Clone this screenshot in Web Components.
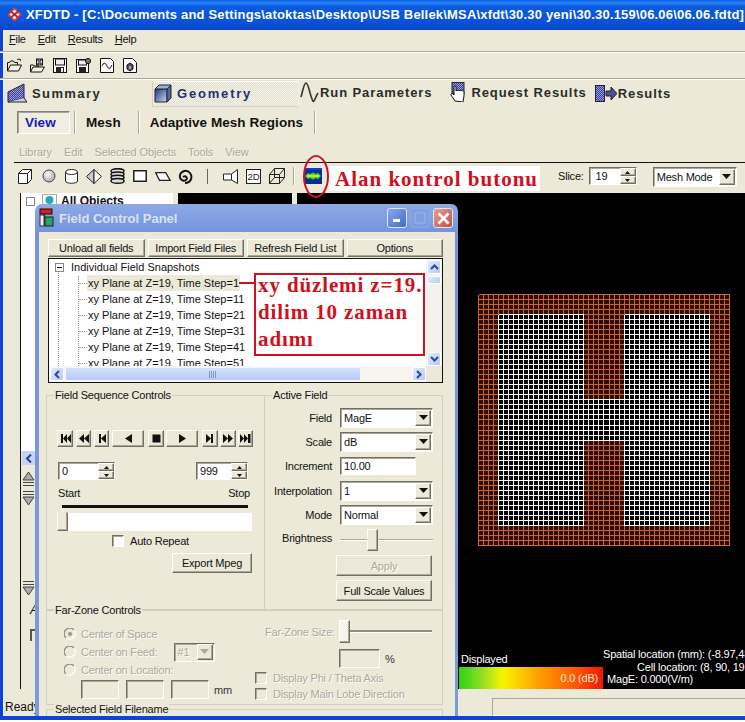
<!DOCTYPE html>
<html><head><meta charset="utf-8">
<style>
html,body{margin:0;padding:0;background:#fff;overflow:hidden}
body{width:745px;height:722px;font-family:"Liberation Sans",Arial,sans-serif;font-size:11px;letter-spacing:-.2px;color:#111}
</style></head><body>
<xfd-app></xfd-app>
<script>
const F='"Liberation Sans",Arial,sans-serif';
function def(name,css,html,init){
  customElements.define(name,class extends HTMLElement{
    constructor(){super();this.attachShadow({mode:'open'});}
    connectedCallback(){
      const h=typeof html==='function'?html(this):html;
      this.shadowRoot.innerHTML='<style>'+css+'</style>'+h;
      if(init)init(this);
    }
  });
}
const raised='background:#ece9d8;border:1px solid;border-color:#fff #716f64 #716f64 #fff;box-shadow:inset -1px -1px 0 #aca899;';
const sunken='border:1px solid;border-color:#716f64 #fff #fff #716f64;box-shadow:inset 1px 1px 0 #aca899;';

/* ---- basic controls ---- */
def('x-btn',`:host{display:flex;box-sizing:border-box;align-items:center;justify-content:center;${raised}font-size:11px;color:#111;white-space:nowrap}
:host([disabled]){color:#aca899;text-shadow:1px 1px 0 #fff}`,`<slot></slot>`);

const arrow=`<svg width="9" height="6" viewBox="0 0 9 6"><path d="M0 0h9L4.5 5z" fill="currentColor"/></svg>`;
def('x-select',`:host{display:flex;box-sizing:border-box;height:20px;background:#fff;${sunken}font-size:11px;color:#111;padding-left:3px;align-items:center;justify-content:space-between}
:host([disabled]){background:#ece9d8;color:#aca899}
b{display:flex;box-sizing:border-box;width:16px;height:16px;margin:1px;${raised}align-items:center;justify-content:center;font-weight:normal;color:#111}
:host([disabled]) b{color:#aca899}
svg{display:block}`,e=>`<span>${e.getAttribute('value')}</span><b>${arrow}</b>`);

def('x-input',`:host{display:block;box-sizing:border-box;background:#fff;${sunken}font-size:11px;color:#111;padding:1px 3px;line-height:15px}
:host([disabled]){background:#ece9d8}`,`<slot></slot>`);

def('x-spin',`:host{display:flex;box-sizing:border-box;height:18px;background:#fff;${sunken}font-size:11px;color:#111;align-items:center;justify-content:space-between;padding-left:3px}
i{display:flex;flex-direction:column;width:16px;height:16px}
u{flex:1;display:flex;${raised}align-items:center;justify-content:center;text-decoration:none;font:7px/1 ${F};color:#111}`,
e=>`<span>${e.getAttribute('value')}</span><i><u><svg width="5" height="3"><path d="M0 3h5L2.5 0z" fill="#111"/></svg></u><u><svg width="5" height="3"><path d="M0 0h5L2.5 3z" fill="#111"/></svg></u></i>`);

def('x-group',`:host{display:block;box-sizing:border-box;position:relative;border:1px solid #d0d0bf;border-radius:0}
.l{position:absolute;left:7px;top:-8px;background:#ece9d8;padding:0 1px;font-size:11px;line-height:15px;color:#111;white-space:nowrap}`,
e=>`<div class="l">${e.getAttribute('legend')}</div><slot></slot>`);

def('x-check',`:host{display:flex;align-items:center;font-size:11px;color:#111;white-space:nowrap}
:host([disabled]){color:#aca899;text-shadow:1px 1px 0 #fff}
s{display:block;box-sizing:border-box;width:12px;height:12px;background:#fff;${sunken}margin-right:6px;flex:none}
:host([disabled]) s{background:#ece9d8}`,`<s></s><slot></slot>`);

def('x-radio',`:host{display:flex;align-items:center;font-size:11px;color:#aca899;text-shadow:1px 1px 0 #fff;white-space:nowrap}
svg{margin-right:5px;flex:none}`,e=>`<svg width="12" height="12" viewBox="0 0 12 12"><circle cx="6" cy="6" r="5.5" fill="#ece9d8"/><path d="M1.8 9.8A5.5 5.5 0 0 1 9.8 1.8" fill="none" stroke="#8f8d80" stroke-width="1.3"/><path d="M10.2 2.6A5.5 5.5 0 0 1 2.6 10.2" fill="none" stroke="#fff" stroke-width="1.2"/>${e.hasAttribute('on')?'<circle cx="6" cy="6" r="2" fill="#9a988a"/>':''}</svg><slot></slot>`);

/* ---- app top ---- */
def('xfd-title',`:host{display:flex;box-sizing:border-box;height:30px;align-items:center;padding-left:7px;padding-bottom:1px;background:linear-gradient(#0a5fe8 0,#2a83f5 3px,#0b5ce0 6px,#0a50d8 24px,#0a44c4 30px);color:#fff;white-space:nowrap;overflow:hidden;font:bold 13px ${F};letter-spacing:.185px}
svg{flex:none;margin-right:4px}`,
`<svg width="15" height="15" viewBox="0 0 15 15"><path d="M7.5 0L15 7.5 7.5 15 0 7.5z" fill="#d33a3a"/><path d="M7.5 2.5l5 5-5 5-5-5z" fill="#fff"/><path d="M4 4.5l7 6M11 4.5l-7 6" stroke="#b22" stroke-width="1.8"/></svg><span>XFDTD - [C:\\Documents and Settings\\atoktas\\Desktop\\USB Bellek\\MSA\\xfdt\\30.30 yeni\\30.30.159\\06.06\\06.06.fdtd]</span>`);

def('xfd-menu',`:host{display:flex;box-sizing:border-box;height:22px;align-items:center;padding-left:9px;gap:12px;border-bottom:1px solid #aca899;box-shadow:0 1px 0 #fff;font-size:11px;letter-spacing:-.25px;color:#111;padding-bottom:3px}
u{text-decoration:underline}`,`<span><u>F</u>ile</span><span><u>E</u>dit</span><span><u>R</u>esults</span><span><u>H</u>elp</span>`);

const S='fill="none" stroke="#111"';
def('xfd-filebar',`:host{display:flex;box-sizing:border-box;height:27px;align-items:center;padding-left:7px;gap:8px;border-bottom:1px solid #aca899;box-shadow:0 1px 0 #fff}
svg{display:block;flex:none}`,
`<svg width="15" height="15" viewBox="0 0 15 15" ${S}><path d="M.5 13V4.5h2l1-1.5h3l1 1.5h3V7"/><path d="M.5 13l3-6h11l-3 6z" fill="#f6f4ea"/><path d="M10 2c1-1.2 3-1.2 4 .2l-1 .3" /></svg>
<svg width="15" height="15" viewBox="0 0 15 15" ${S}><path d="M.5 14V7h3l1 1h4V10"/><path d="M.5 14l2.5-5h11.500l-3 5z" fill="#f6f4ea"/><rect x="6.500" y="1" width="6" height="6" fill="#ddd"/><path d="M8 1v2h3V1M8 7V5h3v2"/></svg>
<svg width="14" height="15" viewBox="0 0 14 15"><rect x=".5" y=".5" width="13" height="14" fill="#fff" stroke="#111"/><rect x="2.500" y="1" width="9" height="6" fill="#eee" stroke="#111"/><rect x="3" y="9" width="8" height="5.500" fill="#222"/><rect x="8" y="10" width="2" height="4" fill="#eee"/></svg>
<svg width="15" height="15" viewBox="0 0 15 15" style="margin-left:1px"><rect x=".5" y="1.500" width="12" height="13" fill="#fff" stroke="#111"/><rect x="2.500" y="2" width="8" height="5" fill="#eee" stroke="#111"/><rect x="3" y="9" width="7" height="5.500" fill="#222"/><circle cx="12" cy="3" r="2.600" fill="#777" stroke="#111"/></svg>
<svg width="14" height="15" viewBox="0 0 14 15" style="margin-left:1px"><path d="M.5.500h10l3 3v11H.5z" fill="#fff" stroke="#111"/><path d="M2 8c2-4 3-4 5 0s3 3 5-1" fill="none" stroke="#445" stroke-width="1.200"/></svg>
<svg width="14" height="15" viewBox="0 0 14 15" style="margin-left:1px"><path d="M.5.500h9l4 4v10H.5z" fill="#fff" stroke="#111"/><path d="M4 7l3-2 3 2v4l-3 2-3-2z" fill="#555" stroke="#111"/><path d="M7 8v3" stroke="#fff"/></svg>`);

const hatch=`<pattern id="h" width="2" height="2" patternUnits="userSpaceOnUse"><rect width="2" height="2" fill="#3d3f95"/><rect width="1" height="1" fill="#9a9ce0"/><rect x="1" y="1" width="1" height="1" fill="#9a9ce0"/></pattern>`;
def('xfd-tabs',`:host{display:flex;box-sizing:border-box;height:28px;align-items:center;font:bold 13px ${F};letter-spacing:.9px;color:#2b2b2b;white-space:nowrap}
svg{display:block;flex:none}
.t{display:flex;align-items:center}
.geo{box-sizing:border-box;width:147px;height:26px;padding-left:1px;border:1px solid;border-color:#fff #f5f4ec #d4d2c2 #d4d2c2;background:repeating-conic-gradient(#f4f2e8 0 25%,#e4e1d0 0 50%) 0 0/2px 2px;color:#23307a;letter-spacing:1.800px;margin-top:1px}
.geo svg{margin-right:5px}`,
`<div class="t" style="margin-left:7px;letter-spacing:1.400px"><svg width="21" height="20" viewBox="0 0 21 20" style="margin-right:4px"><defs>${hatch}</defs><path d="M1 9L17 1v14L1 19z" fill="url(#h)" stroke="#223"/><path d="M1 19h19l-3-4" fill="#cfcfe8" stroke="#223"/></svg>Summary</div>
<div class="t geo" style="margin-left:51px"><svg width="18" height="19" viewBox="0 0 18 19"><defs><linearGradient id="g" x1="0" y1="0" x2="1" y2="1"><stop offset="0" stop-color="#1d3a7a"/><stop offset="1" stop-color="#c8d8f0"/></linearGradient></defs><path d="M1 5h12v13H1z" fill="url(#g)" stroke="#223"/><path d="M1 5l4-4h12l-4 4z" fill="#9db1d0" stroke="#223"/><path d="M13 5l4-4v13l-4 4z" fill="#4a6aa0" stroke="#223"/></svg>Geometry</div>
<div class="t" style="margin-left:1px;margin-top:-2px"><svg width="19" height="21" viewBox="0 0 19 21" style="margin-right:1px"><path d="M1 15C3 8 4 1 6 1s3 7 5 13 2 6 3 5 2-5 4-8" fill="none" stroke="#333" stroke-width="1.600"/></svg>Run Parameters</div>
<div class="t" style="margin-left:18px;margin-top:-2px"><svg width="18" height="20" viewBox="0 0 18 20" style="margin-right:3px"><defs>${hatch}</defs><rect x="2" y="0.500" width="12" height="11" fill="url(#h)" stroke="#223"/><path d="M5 19l-4-6c-.5-1.500 1-2 2-1l1 1V5c0-1.500 2-1.500 2 0v4c0-1 2-1 2 0 0-1 2-1 2 0 0-1 2-.6 2 0 .5-.5 2 0 2 1v4l-1 6z" fill="#fff" stroke="#111"/></svg>Request Results</div>
<div class="t" style="margin-left:8px"><svg width="22" height="17" viewBox="0 0 22 17" style="margin-right:1px"><defs>${hatch}</defs><rect x=".5" y=".5" width="9" height="16" fill="url(#h)" stroke="#223"/><path d="M11 6h5V2l6 6.500-6 6.500v-4h-5z" fill="#4a4c9c" stroke="#223"/></svg>Results</div>`);

def('xfd-subtabs',`:host{display:flex;box-sizing:border-box;height:30px;align-items:center;font:bold 13.500px ${F};letter-spacing:.05px;color:#111;white-space:nowrap;padding-left:17px}
.v{box-sizing:border-box;width:53px;height:23px;display:flex;align-items:center;padding-left:7px;color:#1a1ab8;background:#f0eee2;border:1px solid;border-color:#808076 #fff #fff #808076;box-shadow:inset 1px 1px 0 #a8a698}
.s{width:1px;height:23px;background:#aca899;border-right:1px solid #fff}`,`<div class="v">View</div><div class="s" style="margin-left:4px;margin-right:10px"></div><div>Mesh</div><div class="s" style="margin-left:17px;margin-right:10px"></div><div>Adaptive Mesh Regions</div><div class="s" style="margin-left:11px"></div>`);

def('xfd-menu2',`:host{display:flex;box-sizing:border-box;height:25px;align-items:flex-end;padding:0 0 4px 19px;color:#aca899;font-size:11px;letter-spacing:-.1px;white-space:nowrap;text-shadow:1px 1px 0 #f7f6ef}
span{display:block}`,`<span>Library</span><span style="margin-left:12px">Edit</span><span style="margin-left:12px">Selected Objects</span><span style="margin-left:12px">Tools</span><span style="margin-left:12px">View</span>`);

def('xfd-geobar',`:host{display:flex;box-sizing:border-box;height:31px;margin-left:14px;border-top:1px solid #111;align-items:center;position:relative;white-space:nowrap;font-size:11px;padding-bottom:4px}
svg{display:block;flex:none}
.sep{width:1px;height:15px;background:#666;flex:none}
.sep2{width:1px;height:18px;background:#aca899;border-right:1px solid #fff;flex:none}
.note{box-sizing:border-box;width:211px;height:25px;background:#fff;margin:4px 0 0 7px;font:bold 21px "Liberation Serif",serif;letter-spacing:1px;color:#d01020;line-height:27px;padding-left:6px}
.ring{position:absolute;left:289px;top:-8px;width:26px;height:43px;box-sizing:border-box;border:2px solid #d01020;border-radius:50%}
x-spin{width:48px;margin-left:5px}
x-select{width:84px;margin:2px 0 0 16px;height:20px}`,
`<svg width="14" height="15" viewBox="0 0 14 15" style="margin-left:4px" fill="#fff" stroke="#222"><path d="M.5 4.500h9v10h-9z"/><path d="M.5 4.500l4-4h9l-4 4zM9.500 4.500l4-4v10l-4 4z"/></svg>
<svg width="14" height="14" viewBox="0 0 14 14" style="margin-left:10px"><defs><radialGradient id="sp" cx=".4" cy=".35"><stop offset="0" stop-color="#fff"/><stop offset="1" stop-color="#bbb"/></radialGradient></defs><circle cx="7" cy="7" r="6" fill="url(#sp)" stroke="#444"/></svg>
<svg width="13" height="15" viewBox="0 0 13 15" style="margin-left:9px" fill="#fff" stroke="#222"><path d="M.5 3v9c0 3 12 3 12 0V3"/><ellipse cx="6.500" cy="3" rx="6" ry="2.500"/></svg>
<svg width="16" height="15" viewBox="0 0 16 15" style="margin-left:8px" stroke="#222"><path d="M8 .5L.5 7.500 8 14.500z" fill="#ccc"/><path d="M8 .5l7.500 7-7.500 7z" fill="#fff"/></svg>
<svg width="15" height="16" viewBox="0 0 15 16" style="margin-left:8px" fill="#ddd" stroke="#111" stroke-width="1.500"><ellipse cx="7.500" cy="3" rx="6.500" ry="2.300"/><ellipse cx="7.500" cy="6.300" rx="6.500" ry="2.300"/><ellipse cx="7.500" cy="9.600" rx="6.500" ry="2.300"/><ellipse cx="7.500" cy="12.900" rx="6.500" ry="2.300"/></svg>
<svg width="14" height="12" viewBox="0 0 14 12" style="margin-left:8px"><rect x=".75" y=".75" width="12.500" height="10.500" fill="#fff" stroke="#222" stroke-width="1.500"/></svg>
<svg width="16" height="9" viewBox="0 0 16 9" style="margin-left:8px"><path d="M.7.700h10l4.500 7.600H4.500z" fill="#fff" stroke="#222" stroke-width="1.300"/></svg>
<svg width="16" height="15" viewBox="0 0 16 15" style="margin-left:6px"><path d="M6 8c3-2 5 1 3 3-3 2-7-1-6-5s7-6 10-2 1 10-5 10" fill="none" stroke="#111" stroke-width="1.900"/></svg>
<div class="sep" style="margin-left:14px"></div>
<svg width="15" height="15" viewBox="0 0 15 15" style="margin-left:15px" fill="#fff" stroke="#222"><path d="M.5 5h8v6h-8z"/><path d="M8.500 5L14.500.5v14L8.500 11z"/></svg>
<svg width="15" height="15" viewBox="0 0 15 15" style="margin-left:8px"><rect x=".5" y=".5" width="14" height="14" fill="#fff" stroke="#222"/><text x="7.500" y="11.300" font-size="9.500" text-anchor="middle" fill="#222" font-family="Liberation Sans" letter-spacing="0">2D</text></svg>
<svg width="16" height="16" viewBox="0 0 16 16" style="margin-left:8px" fill="none" stroke="#222"><path d="M.5 6.500h10v9H.5zM.5 6.500l5-6h10l-5 6M10.500 15.500l5-6v-9M5.500.5v9h10M5.500 9.500l-5 6"/></svg>
<div class="sep2" style="margin-left:8px"></div>
<svg width="18" height="16" viewBox="0 0 18 16" style="margin-left:9px"><rect width="18" height="16" fill="#0a2a9c"/><rect y="0" width="18" height="2" fill="#1240c8"/><path d="M1 8l3-3 2 1 3-1.500L12 6l2-1 3 3-3 3-2-1-3 1.500L6 10l-2 1z" fill="#40e020"/><path d="M3 8h12" stroke="#b8f020" stroke-width="2"/></svg>
<div class="note">Alan kontrol butonu</div>
<span style="margin-left:18px">Slice:</span><x-spin value="&nbsp;19"></x-spin>
<x-select value="Mesh Mode"></x-select>
<div class="ring"></div>`);

/* ---- workspace ---- */
def('xfd-mesh',`:host{display:block;width:253px;height:253px;flex:none}svg{display:block}`,()=>{
  const l=[];
  const n=50,c=5.02;
  for(let i=0;i<=n;i++){l.push(Math.round(i*c)+.5);}
  let o='';
  const ax=l[0],bx=l[n];
  for(let i=0;i<=n;i++){o+=`M${l[i]} ${ax}V${bx}M${ax} ${l[i]}H${bx}`;}
  const pw=(c1,c2,r1,r2)=>{
    let d='';
    for(let i=c1;i<=c2;i++)d+=`M${l[i]} ${l[r1]}V${l[r2]}`;
    for(let j=r1;j<=r2;j++)d+=`M${l[c1]} ${l[j]}H${l[c2]}`;
    return d;
  };
  const r=(c1,c2,r1,r2)=>`<rect x="${l[c1]}" y="${l[r1]}" width="${l[c2]-l[c1]}" height="${l[r2]-l[r1]}" fill="#000"/>`;
  const w=pw(4,21,4,46)+pw(29,46,4,46)+pw(21,29,21,29);
  return `<svg width="253" height="253" viewBox="0 0 253 253" shape-rendering="crispEdges">
  <rect x="${ax}" y="${ax}" width="${bx-ax}" height="${bx-ax}" fill="#2e0c02"/>
  <path d="${o}" fill="none" stroke="#c8643c" stroke-width="1"/>
  ${r(4,21,4,46)}${r(29,46,4,46)}${r(21,29,21,29)}
  <path d="${w}" fill="none" stroke="#fff" stroke-width="1"/></svg>`;
});

def('xfd-view',`:host{display:flex;flex-direction:column;box-sizing:border-box;background:#000;color:#fff;font-size:11px;padding-left:161px;overflow:hidden;height:100%;white-space:nowrap}
xfd-mesh{margin:101px 0 0 20px}
.b{display:flex;margin-top:auto;align-items:flex-end;padding-left:1px}
.d{width:144px;flex:none}
.d div:first-child{line-height:15px;padding-left:2px;margin-bottom:0}
.bar{height:22px;width:144px;background:linear-gradient(90deg,#28d418 0,#a0e020 18%,#f6f600 30%,#ffa000 55%,#ff6000 78%,#f01800 100%);text-align:right;box-sizing:border-box;padding:4px 5px 0 0;line-height:15px;color:#ffe7d4}
.r{line-height:12.500px;margin-bottom:3px;flex:none;height:38px}`,
`<xfd-mesh></xfd-mesh><div class="b"><div class="d"><div>Displayed</div><div class="bar">0.0 (dB)</div></div>
<div class="r"><div>Spatial location (mm): (-8.97,48</div><div style="margin-left:34px">Cell location: (8, 90, 19</div><div style="margin-left:4px">MagE: 0.000(V/m)</div></div></div>`);

def('xfd-objects',`:host{display:flex;flex-direction:column;box-sizing:border-box;background:#ece9d8;border-left:1px solid #111;height:100%;overflow:hidden;white-space:nowrap}
.w{height:258px;background:#fff;padding:1px 0 0 5px;box-sizing:border-box;font:bold 12px ${F};letter-spacing:0;display:flex;align-items:flex-start;flex:none}
.x{box-sizing:border-box;width:9px;height:9px;border:1px solid #888;margin:3px 7px 0 0;background:#fff;flex:none}
.h{height:14px;flex:none;display:flex}
.h b{display:flex;width:13px;height:14px;background:#c5d3f8;margin-left:1px;align-items:center;justify-content:center}
.t{display:block;margin:4px 0 0 1px;flex:none}
.a{margin:5px 0 0 9px;color:#111;font:italic 13px/15px ${F}}
.c{width:9px;height:12px;flex:none;border:2px solid #555;border-right:0;border-bottom:0;margin:12px 0 0 9px;box-sizing:border-box}`,
`<div class="w"><div class="x"></div><svg width="15" height="14" viewBox="0 0 15 14" style="margin-right:4px;flex:none"><rect x=".5" y=".5" width="14" height="13" fill="none" stroke="#555" stroke-dasharray="1 1"/><circle cx="7.500" cy="6" r="4" fill="#2ab"/></svg>All Objects</div>
<div class="h"><b><svg width="7" height="9"><path d="M6 .5L2 4.500 6 8.500" fill="none" stroke="#22448c" stroke-width="2"/></svg></b></div>
<svg class="t" width="13" height="38" viewBox="0 0 13 38" fill="#aaa" stroke="#444"><path d="M1 11L6.500 3 12 11z"/><path d="M1 13.500h11M1 16.500h11M1 22.500h11M1 25.500h11"/><path d="M1 28L6.500 36 12 28z"/></svg>
<svg class="t" style="margin-top:73px" width="13" height="17" viewBox="0 0 13 17" fill="#aaa" stroke="#444"><path d="M1 1.500h11M1 4.500h11"/><path d="M1 7L6.500 15 12 7z"/></svg>
<div class="a">A</div><div class="c"></div>`);

def('xfd-workspace',`:host{display:grid;box-sizing:border-box;grid-template-columns:153px 114px 1fr;gap:0 5px;height:496px;margin-left:20px}
.m{background:#000;height:100%}
.v{min-width:0}`,
`<xfd-objects></xfd-objects><div class="m"></div><div class="v"><xfd-view></xfd-view></div>`);

def('xfd-status',`:host{display:flex;box-sizing:border-box;height:27px;align-items:flex-end;padding-left:5px;font-size:12px;letter-spacing:0;color:#111}
span{margin-bottom:2px}
.p{margin-left:auto;width:253px;height:18px;box-sizing:border-box;border:1px solid;border-color:#aca899 #fff #fff #aca899;border-right:0}`,`<span>Ready</span><div class="p"></div>`);

/* ---- Field control panel ---- */
def('fp-titlebar',`:host{display:flex;box-sizing:border-box;height:28px;flex:none;align-items:center;padding:0 2px 0 0;color:#d9e2f6;font:bold 13px ${F};letter-spacing:0;white-space:nowrap}
svg{display:block;flex:none}
span{flex:1;margin-left:5px}
b{display:flex;box-sizing:border-box;width:20px;height:20px;border-radius:3px;margin-left:3px;border:1px solid #dfe6f6;align-items:center;justify-content:center}
.mn{background:linear-gradient(135deg,#8aa8ec,#3f6cd0)}
.mx{background:#7f9fe4;border-color:#8caae8;opacity:.9}
.cl{background:linear-gradient(135deg,#e8a090,#c05048)}`,
`<svg width="15" height="20" viewBox="0 0 15 20"><rect x="1" y="1" width="12" height="5" fill="#c22" stroke="#300"/><path d="M5 6v11" stroke="#333" stroke-width="2.500"/><rect x="6" y="9" width="8" height="9" fill="#2aa65a" stroke="#123"/><rect x="1" y="7" width="4" height="11" fill="#eee" stroke="#333"/></svg>
<span>Field Control Panel</span>
<b class="mn"><svg width="8" height="8"><rect x="0" y="5" width="7" height="3" fill="#fff"/></svg></b>
<b class="mx"><svg width="12" height="12" fill="none" stroke="#9db6ea"><rect x="1" y="1" width="10" height="10"/></svg></b>
<b class="cl"><svg width="13" height="13" stroke="#fff" stroke-width="2.500"><path d="M1.500 1.500l10 10M11.500 1.500l-10 10"/></svg></b>`);

def('fp-tree',`:host{display:grid;grid-template-columns:minmax(0,1fr) 16px;grid-template-rows:minmax(0,1fr) 16px;box-sizing:border-box;height:125px;flex:none;background:#fff;border:1px solid #111;position:relative;overflow:hidden}
.list{grid-column:1;grid-row:1;overflow:hidden;font-size:11px;color:#111;position:relative;white-space:nowrap;letter-spacing:0}
.row{height:16px;line-height:16px;display:flex;align-items:center;position:relative;padding-left:30px}
.row::before{content:"";width:8px;border-top:1px dotted #999;flex:none}
.row span{padding:0 1px}
.row.sel span{background:#ece9d8}
.root{padding-left:6px}
.root::before{display:none}
.ex{width:9px;height:9px;box-sizing:border-box;border:1px solid #888;margin-right:6px;position:relative;flex:none;background:#fff}
.ex::after{content:"";position:absolute;left:1px;right:1px;top:3px;height:1px;background:#111}
.g{position:absolute;left:9px;top:12px;bottom:0;border-left:1px dotted #999}
.g2{position:absolute;left:29px;top:17px;bottom:0;border-left:1px dotted #999}
.v{grid-column:2;grid-row:1;display:flex;flex-direction:column;background:#f3f2ec;padding:1px 0 0 0}
.sb{display:flex;flex:none;width:14px;height:14px;margin-left:1px;border-radius:2px;background:linear-gradient(135deg,#e4ebfd,#b6c8f6);border:1px solid #fff;box-sizing:border-box;align-items:center;justify-content:center}
.h{grid-column:1;grid-row:2;display:flex;background:#f6f5ef;align-items:center;padding-left:1px}
.c{grid-column:2;grid-row:2;background:#ece9d8}
.thh{flex:none;width:296px;height:14px;margin:0 1px;background:linear-gradient(#d6e1fb,#b8caf6);border:1px solid #f4f7ff;border-radius:2px;box-sizing:border-box;display:flex;align-items:center;justify-content:center}
svg{display:block}
.note{position:absolute;left:205px;top:14px;box-sizing:border-box;width:171px;height:83px;background:#fff;border:2px solid #d01020;font:bold 21px/27px "Liberation Serif",serif;letter-spacing:.88px;color:#d01020;padding:0 0 0 2px;white-space:nowrap;overflow:hidden}
.note div{margin-top:-3px}
.line{position:absolute;left:190px;top:23px;width:16px;height:2px;background:#d01020}`,
`<div class="list"><div class="g"></div><div class="g2"></div>
<div class="row root"><div class="ex"></div><span>Individual Field Snapshots</span></div>
<div class="row sel"><span>xy Plane at Z=19, Time Step=1</span></div>
<div class="row"><span>xy Plane at Z=19, Time Step=11</span></div>
<div class="row"><span>xy Plane at Z=19, Time Step=21</span></div>
<div class="row"><span>xy Plane at Z=19, Time Step=31</span></div>
<div class="row"><span>xy Plane at Z=19, Time Step=41</span></div>
<div class="row"><span>xy Plane at Z=19, Time Step=51</span></div></div>
<div class="v"><div class="sb"><svg width="9" height="6"><path d="M1 5l3.500-3.500L8 5" fill="none" stroke="#2b4a94" stroke-width="2"/></svg></div><div class="sb" style="height:8px;margin-top:2px"></div><div style="flex:1"></div><div class="sb"><svg width="9" height="6"><path d="M1 1l3.500 3.500L8 1" fill="none" stroke="#2b4a94" stroke-width="2"/></svg></div></div>
<div class="h"><div class="sb" style="margin:0"><svg width="6" height="9"><path d="M5 1L1.500 4.500 5 8" fill="none" stroke="#2b4a94" stroke-width="2"/></svg></div><div class="thh"><svg width="8" height="7" stroke="#7d97d8"><path d="M.5 0v7M2.500 0v7M4.500 0v7M6.500 0v7"/></svg></div><div style="flex:1"></div><div class="sb"><svg width="6" height="9"><path d="M1 1l3.500 3.500L1 8" fill="none" stroke="#2b4a94" stroke-width="2"/></svg></div></div><div class="c"></div>
<div class="line"></div><div class="note"><div>xy düzlemi z=19.<br>dilim 10 zaman<br>adımı</div></div>`);

const tp=d=>`<svg width="11" height="11" viewBox="0 0 11 11" fill="#111">${d}</svg>`;
def('fp-sequence',`:host{display:block;box-sizing:border-box;height:100%;padding:34px 0 0 10px;font-size:11px;color:#111}
.tr{display:flex;height:17px;width:196px}
.tr x-btn{height:17px;flex:none;box-sizing:border-box}
svg{display:block}
.sp{display:flex;justify-content:space-between;width:190px;margin:15px 0 0 1px}
.lb{display:flex;justify-content:space-between;width:192px;margin:6px 0 0 1px;line-height:14px}
.rail{height:3px;width:186px;background:#111;margin:5px 0 0 5px}
.sl{height:21px;position:relative;margin:2px 0 0 0;width:195px;padding-top:3px;box-sizing:border-box}
.sl i{display:block;height:18px;background:#fff;margin-left:1px}
.sl s{position:absolute;left:0;top:0;width:11px;height:21px;box-sizing:border-box;${raised}clip-path:polygon(0 3px,50% 0,100% 3px,100% 100%,0 100%)}
x-check{margin:4px 0 0 55px}
.ex{display:flex;margin:6px 0 0 115px}
.ex x-btn{width:80px;height:20px}`,
`<div class="tr">
<x-btn style="width:16px">${tp('<path d="M1 1h2v9H1zM7 1L3 5.500 7 10zM11 1L7 5.500 11 10z"/>')}</x-btn>
<x-btn style="width:15px;margin-left:3px">${tp('<path d="M6 1L1 5.500 6 10zM11 1L6 5.500 11 10z"/>')}</x-btn>
<x-btn style="width:15px;margin-left:3px">${tp('<path d="M3 1h2v9H3zM10 1L5 5.500 10 10z"/>')}</x-btn>
<x-btn style="width:32px;margin-left:3px">${tp('<path d="M9 1L2 5.500 9 10z"/>')}</x-btn>
<x-btn style="width:16px;margin-left:4px">${tp('<rect x="1.500" y="1.500" width="8" height="8"/>')}</x-btn>
<x-btn style="width:32px;margin-left:2px">${tp('<path d="M2 1l7 4.500L2 10z"/>')}</x-btn>
<x-btn style="width:16px;margin-left:4px">${tp('<path d="M1 1l5 4.500L1 10zM6 1h2v9H6z"/>')}</x-btn>
<x-btn style="width:16px;margin-left:2px">${tp('<path d="M0 1l5 4.500L0 10zM5 1l5 4.500L5 10z"/>')}</x-btn>
<x-btn style="width:15px;margin-left:2px">${tp('<path d="M0 1l4 4.500L0 10zM4 1l4 4.500L4 10zM8 1h2.500v9H8z"/>')}</x-btn>
</div>
<div class="sp"><x-spin value="0" style="width:57px"></x-spin><x-spin value="999" style="width:52px"></x-spin></div>
<div class="lb"><span>Start</span><span>Stop</span></div>
<div class="rail"></div>
<div class="sl"><i></i><s></s></div>
<x-check>Auto Repeat</x-check>
<div class="ex"><x-btn>Export Mpeg</x-btn></div>`);

def('fp-active',`:host{display:block;box-sizing:border-box;height:100%;padding:12px 0 0 0;font-size:11px;color:#111}
.r{display:grid;grid-template-columns:67px 93px;column-gap:8px;align-items:center;height:20px;margin-bottom:4px}
.r span{text-align:right;white-space:nowrap}
.tk{position:relative;height:22px;display:flex;align-items:center}
.tk::before{content:"";display:block;width:100%;height:1px;background:#aca899;border-bottom:1px solid #fff}
.tk s{position:absolute;left:27px;top:0;width:11px;height:22px;box-sizing:border-box;${raised}}
x-btn{height:21px;width:96px;margin-left:71px}
x-input{width:76px;height:18px}`,
`<div class="r"><span>Field</span><x-select value="MagE"></x-select></div>
<div class="r"><span>Scale</span><x-select value="dB"></x-select></div>
<div class="r" style="margin-bottom:5px"><span>Increment</span><x-input>10.00</x-input></div>
<div class="r"><span>Interpolation</span><x-select value="1"></x-select></div>
<div class="r"><span>Mode</span><x-select value="Normal"></x-select></div>
<div class="r" style="height:22px;margin-bottom:4px"><span style="margin-top:-5px">Brightness</span><div class="tk"><s></s></div></div>
<x-btn disabled>Apply</x-btn>
<x-btn style="margin-top:4px">Full Scale Values</x-btn>`);

def('fp-farzone',`:host{display:grid;grid-template-columns:191px 1fr;box-sizing:border-box;height:100%;padding:14px 0 0 17px;font-size:11px;color:#aca899;text-shadow:1px 1px 0 #fff;white-space:nowrap}
.l{display:flex;flex-direction:column}
.row{display:flex;align-items:center;height:18px}
.in{display:flex;gap:7px;margin:1px 0 0 17px;align-items:center}
.in x-input{width:38px;height:19px}
.in span{color:#333;text-shadow:none;margin-left:-2px}
x-select{width:41px;height:19px;margin-left:16px}
.top{display:flex;align-items:center;height:23px;margin-top:-5px;margin-left:10px;position:relative}
.top .lbl{width:74px}
.trk{width:93px;height:2px;background:#8f8d80;position:relative;border-bottom:1px solid #fff}
.trk s{position:absolute;left:0;top:-10px;width:11px;height:23px;box-sizing:border-box;${raised}background:repeating-conic-gradient(#ece9d8 0 25%,#fff 0 50%) 0 0/2px 2px}
.pc{display:flex;align-items:center;margin:6px 0 3px 84px;gap:5px}
.pc span{color:#333;text-shadow:none}
.pc x-input{width:41px;height:19px}
x-check{margin-bottom:3px;height:13px}`,
`<div class="l"><x-radio on class="row">Center of Space</x-radio><div class="row"><x-radio>Center on Feed:</x-radio><x-select disabled value="#1"></x-select></div><x-radio class="row">Center on Location:</x-radio>
<div class="in"><x-input disabled></x-input><x-input disabled></x-input><x-input disabled></x-input><span>mm</span></div></div>
<div><div class="top"><div class="lbl">Far-Zone Size:</div><div class="trk"><s></s></div></div>
<div class="pc"><x-input disabled></x-input><span>%</span></div>
<x-check disabled>Display Phi / Theta Axis</x-check><x-check disabled>Display Main Lobe Direction</x-check></div>`);

def('fp-panel',`:host{position:absolute;left:35px;top:204px;width:423px;height:516px;box-sizing:border-box;border-radius:7px 7px 0 0;padding:0 3px 0 4px;display:flex;flex-direction:column;overflow:hidden;background:linear-gradient(#8fa9e6,#7494dc 28px,#7d9ad8)}
.b{flex:1;background:#ece9d8;padding:7px 12px 0 9px;display:flex;flex-direction:column;min-height:0}
.btns{display:flex;gap:3px;height:18px;flex:none}
.btns x-btn{flex:1}
.mid{display:grid;grid-template-columns:219px 178px;margin:12px 0 0 -2px;height:215px;flex:none}
.far{height:95px;margin:0 0 0 -2px;flex:none;width:397px}
.sel{margin:4px 0 0 -2px;height:30px;flex:none;width:397px}
x-group{height:100%}
.mid x-group+x-group{border-left:0}`,
`<fp-titlebar></fp-titlebar><div class="b">
<div class="btns"><x-btn>Unload all fields</x-btn><x-btn>Import Field Files</x-btn><x-btn>Refresh Field List</x-btn><x-btn>Options</x-btn></div>
<fp-tree style="margin-top:1px"></fp-tree>
<div class="mid"><x-group legend="Field Sequence Controls"><fp-sequence></fp-sequence></x-group><x-group legend="Active Field"><fp-active></fp-active></x-group></div>
<div class="far"><x-group legend="Far-Zone Controls"><fp-farzone></fp-farzone></x-group></div>
<div class="sel"><x-group legend="Selected Field Filename"></x-group></div>
</div>`);

def('xfd-app',`:host{display:block;box-sizing:border-box;position:relative;width:745px;height:720px;background:linear-gradient(90deg,#0a45d8 3px,#ece9d8 3px);border-bottom:4px solid #0a45d8;overflow:hidden}`,
`<xfd-title></xfd-title><xfd-menu></xfd-menu><xfd-filebar></xfd-filebar><xfd-tabs></xfd-tabs><xfd-subtabs></xfd-subtabs><xfd-menu2></xfd-menu2><xfd-geobar></xfd-geobar><xfd-workspace></xfd-workspace><xfd-status></xfd-status><fp-panel></fp-panel>`);
</script>
</body></html>
